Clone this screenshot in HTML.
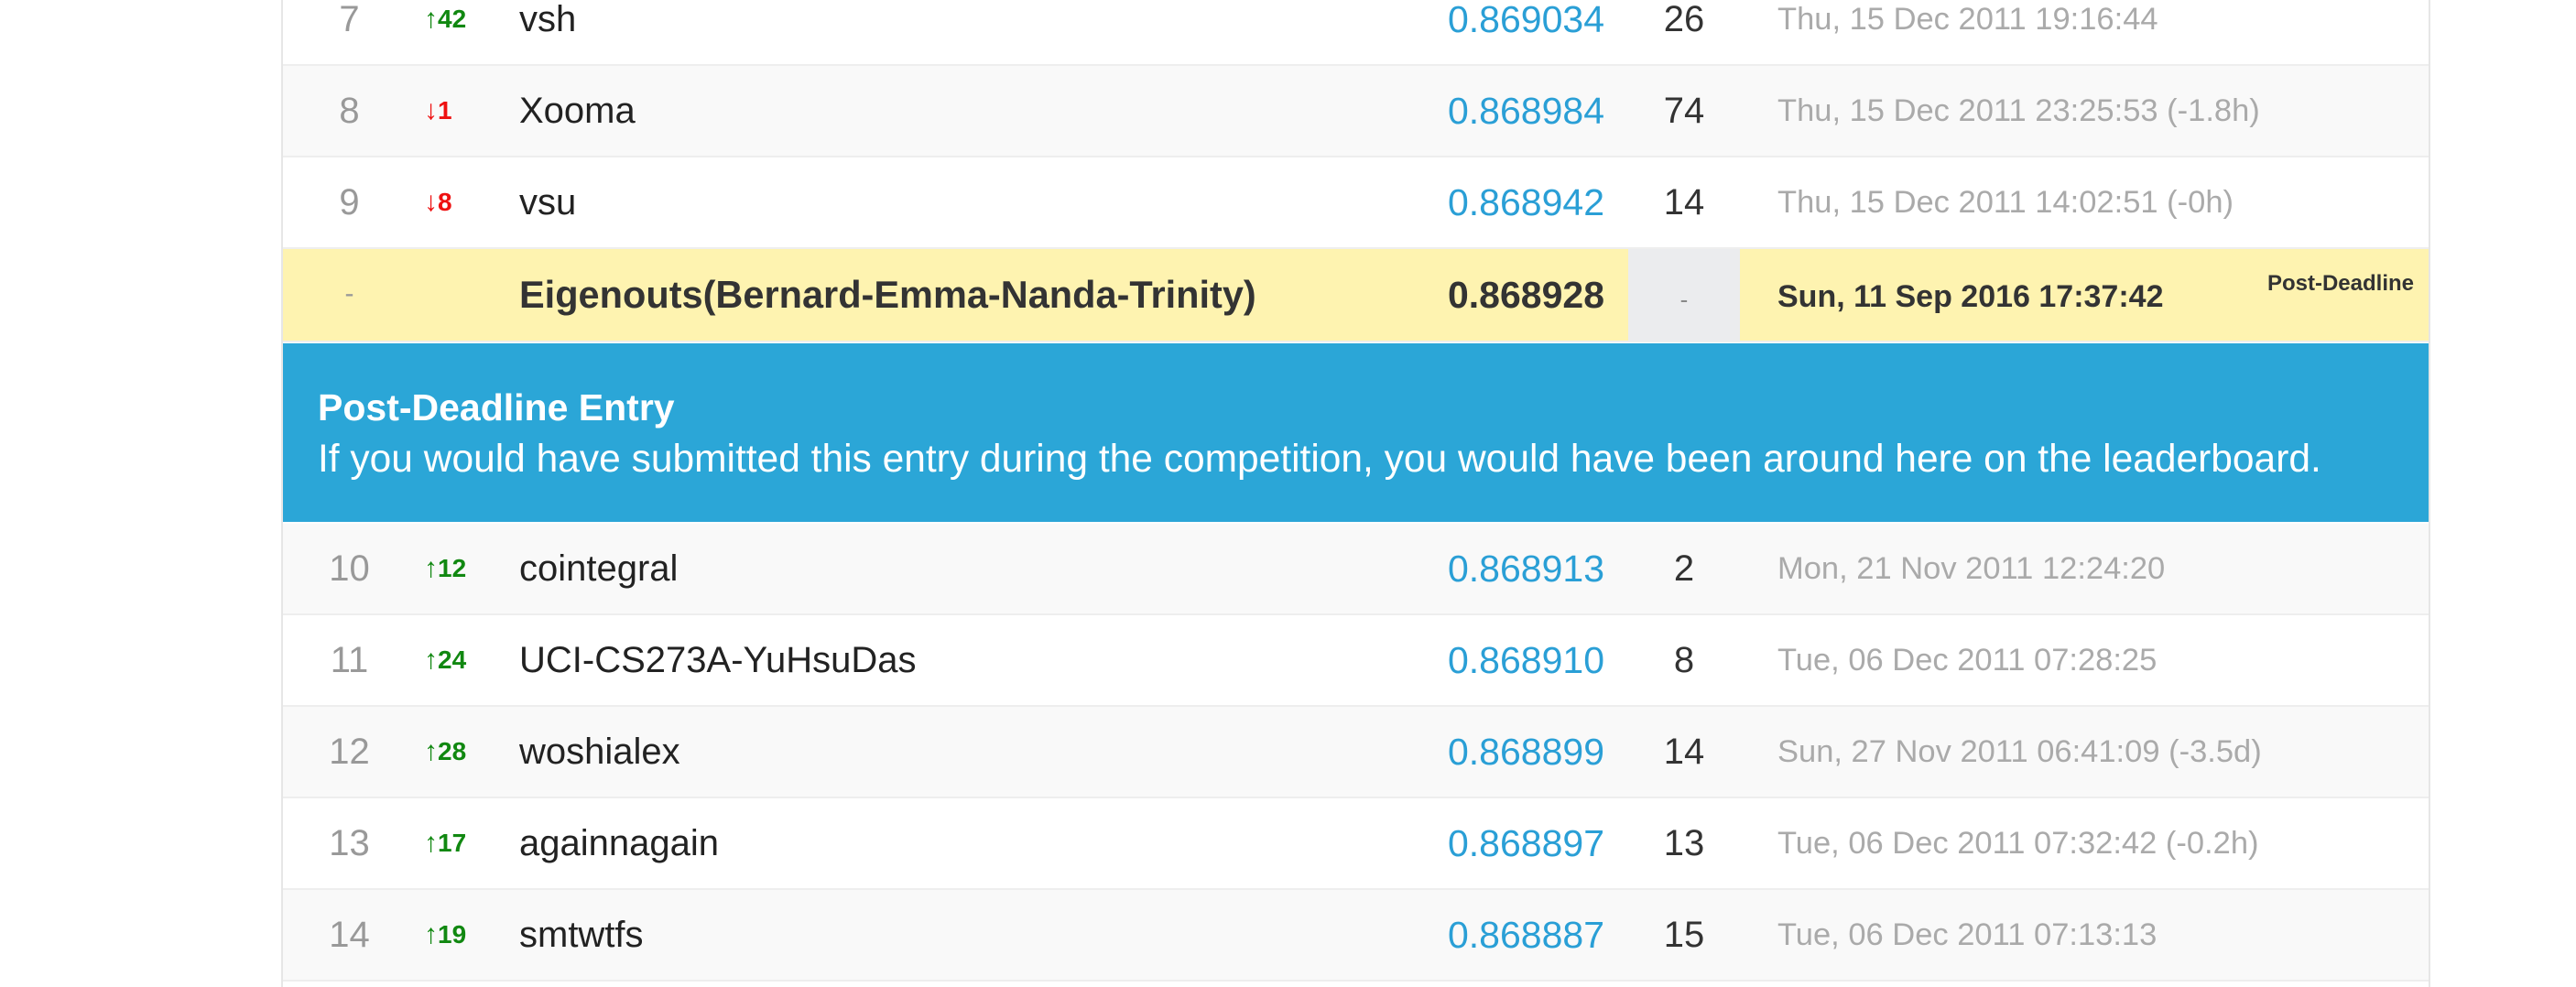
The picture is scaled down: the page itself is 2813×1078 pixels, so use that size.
<!DOCTYPE html>
<html><head><meta charset="utf-8"><style>
*{margin:0;padding:0;box-sizing:border-box}
html,body{width:2813px;height:1078px;overflow:hidden}
body{background:#fff;font-family:"Liberation Sans",sans-serif;position:relative}
.tbl{position:absolute;left:307px;width:2347px;top:0;height:1078px;border-left:2px solid #e6e6e6;border-right:2px solid #e6e6e6}
.r{position:absolute;left:309px;width:2343px;height:100px;border-bottom:2px solid #eee}
.r div{position:absolute;top:0;height:98px;line-height:98px;white-space:nowrap}
.rk{left:0;width:145px;text-align:center;color:#999;font-size:40px}
.ch{left:154px;font-size:28px;font-weight:bold}
.up{color:#118811}.dn{color:#e11}
.ch span{font-weight:normal;font-size:30px}
.nm{left:258px;font-size:40px;color:#222}
.sc{right:900px;font-size:41px;color:#2a9fd6;text-align:right}
.en{left:1469px;width:122px;text-align:center;font-size:40px;color:#333}
.dt{left:1632px;font-size:34.5px;color:#aaa}
.odd{background:#f9f9f9}
</style></head><body>
<div class="tbl"></div>

<div class="r" style="top:-28px"><div class="rk">7</div><div class="ch up"><span>↑</span>42</div><div class="nm">vsh</div><div class="sc">0.869034</div><div class="en">26</div><div class="dt">Thu, 15 Dec 2011 19:16:44</div></div>
<div class="r odd" style="top:72px"><div class="rk">8</div><div class="ch dn"><span>↓</span>1</div><div class="nm">Xooma</div><div class="sc">0.868984</div><div class="en">74</div><div class="dt">Thu, 15 Dec 2011 23:25:53 (-1.8h)</div></div>
<div class="r" style="top:172px"><div class="rk">9</div><div class="ch dn"><span>↓</span>8</div><div class="nm">vsu</div><div class="sc">0.868942</div><div class="en">14</div><div class="dt">Thu, 15 Dec 2011 14:02:51 (-0h)</div></div>

<div class="r" style="top:272px;background:#fef3b0;height:102px">
<div class="rk" style="font-size:30px">-</div>
<div class="nm" style="font-weight:bold;color:#333;font-size:41.5px;line-height:100px">Eigenouts(Bernard-Emma-Nanda-Trinity)</div>
<div class="sc" style="font-weight:bold;color:#333;line-height:100px">0.868928</div>
<div style="left:1469px;width:122px;background:#ebecee;text-align:center;color:#888;font-size:26px;line-height:110px;height:100px">-</div>
<div class="dt" style="font-weight:bold;color:#333;font-size:34px;line-height:104px">Sun, 11 Sep 2016 17:37:42</div>
<div style="right:16px;font-size:24px;font-weight:bold;color:#333;line-height:1;top:26px;height:auto">Post-Deadline</div>
</div>

<div style="position:absolute;left:309px;top:375px;width:2343px;height:195px;background:#2ba6d7;color:#fff">
<div style="position:absolute;top:47px;left:38px;font-size:41px;font-weight:bold">Post-Deadline Entry</div>
<div style="position:absolute;top:103px;left:38px;font-size:42.5px;white-space:nowrap">If you would have submitted this entry during the competition, you would have been around here on the leaderboard.</div>
</div>

<div class="r odd" style="top:572px"><div class="rk">10</div><div class="ch up"><span>↑</span>12</div><div class="nm">cointegral</div><div class="sc">0.868913</div><div class="en">2</div><div class="dt">Mon, 21 Nov 2011 12:24:20</div></div>
<div class="r" style="top:672px"><div class="rk">11</div><div class="ch up"><span>↑</span>24</div><div class="nm">UCI-CS273A-YuHsuDas</div><div class="sc">0.868910</div><div class="en">8</div><div class="dt">Tue, 06 Dec 2011 07:28:25</div></div>
<div class="r odd" style="top:772px"><div class="rk">12</div><div class="ch up"><span>↑</span>28</div><div class="nm">woshialex</div><div class="sc">0.868899</div><div class="en">14</div><div class="dt">Sun, 27 Nov 2011 06:41:09 (-3.5d)</div></div>
<div class="r" style="top:872px"><div class="rk">13</div><div class="ch up"><span>↑</span>17</div><div class="nm">againnagain</div><div class="sc">0.868897</div><div class="en">13</div><div class="dt">Tue, 06 Dec 2011 07:32:42 (-0.2h)</div></div>
<div class="r odd" style="top:972px"><div class="rk">14</div><div class="ch up"><span>↑</span>19</div><div class="nm">smtwtfs</div><div class="sc">0.868887</div><div class="en">15</div><div class="dt">Tue, 06 Dec 2011 07:13:13</div></div>
</body></html>
